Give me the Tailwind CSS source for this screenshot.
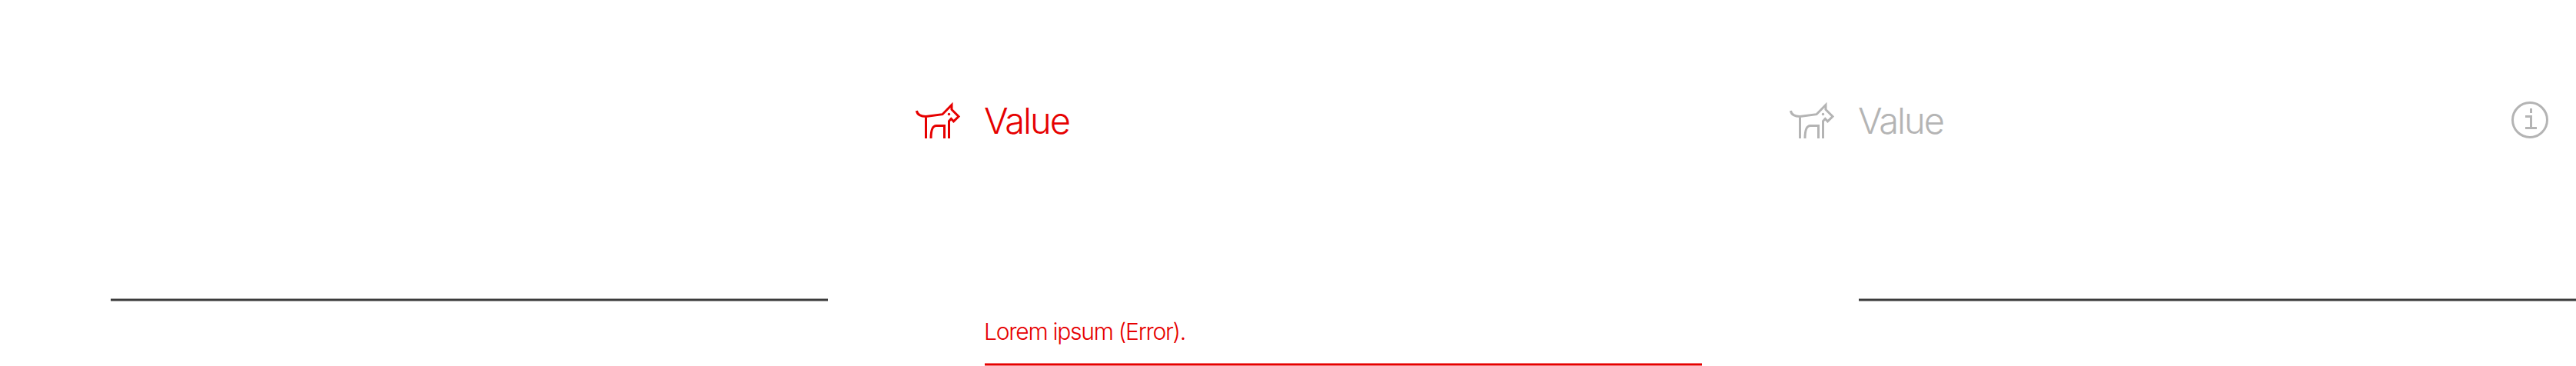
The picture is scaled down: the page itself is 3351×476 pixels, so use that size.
<!DOCTYPE html>
<html lang="en"><head><meta charset="utf-8"><title>Inputs</title>
<script src="https://cdn.jsdelivr.net/npm/@tailwindcss/browser@4"></script></head>
<body class="bg-white font-['Inter',sans-serif] font-light">
<svg class="hidden"><symbol id="dog" viewBox="-1 0 72 72"><g fill="none" stroke="currentColor" stroke-width="3"><path d="M12.500 24C13 29 18 31.500 24.500 31.500L46 28.700L58 16.500V22.500L67 31.500L60.500 37.800L57.300 34.500L54.500 37.500V60M24.500 31V60M31 60C31 48 33.500 43.500 38 43.500H48.500V60"/></g><circle cx="54.500" cy="28.500" r="1.700" fill="currentColor"/></symbol></svg>
<main class="flex h-[476px] w-[3351px] overflow-hidden pl-[144px]">
<section class="w-[933px] shrink-0 pt-[388px]"><svg class="block h-1 w-full text-[#3c3c3c]"><rect y=".5" width="100%" height="3" fill="currentColor"/></svg></section>
<section class="ml-[102px] flex w-[1035px] shrink-0 text-[#e60000]">
<svg class="mt-[120px] mr-[30px] size-[72px] shrink-0"><use href="#dog"/></svg>
<div class="flex w-[933px] shrink-0 flex-col">
<p class="-ml-px mt-[127px] h-[60px] text-[47px] leading-[60px] tracking-[-2px]">Value</p>
<p class="-ml-px mt-[224px] h-[40px] whitespace-nowrap text-[30px] leading-[40px] tracking-[-1.25px]">Lorem ipsum (Error).</p>
<svg class="mt-[21px] block h-1 w-full shrink-0"><rect y=".5" width="100%" height="3" fill="currentColor"/></svg>
</div></section>
<section class="ml-[102px] flex w-[1035px] shrink-0 text-[#b4b4b4]">
<svg class="mt-[120px] mr-[30px] size-[72px] shrink-0"><use href="#dog"/></svg>
<div class="w-[933px] shrink-0">
<div class="flex justify-between pt-[120px] pr-6"><p class="-ml-px mt-[7px] h-[60px] text-[47px] leading-[60px] tracking-[-2px]">Value</p>
<svg class="size-[72px]" viewBox="0 0 72 72" fill="none" stroke="currentColor" stroke-width="3"><circle cx="36" cy="36" r="22.500"/><path d="M37.500 21V27M30 31.500H37.500V46.500M30 46.500H45"/></svg></div>
<svg class="mt-[196px] block h-1 w-full text-[#3c3c3c]"><rect y=".5" width="100%" height="3" fill="currentColor"/></svg>
</div></section>
</main></body></html>
